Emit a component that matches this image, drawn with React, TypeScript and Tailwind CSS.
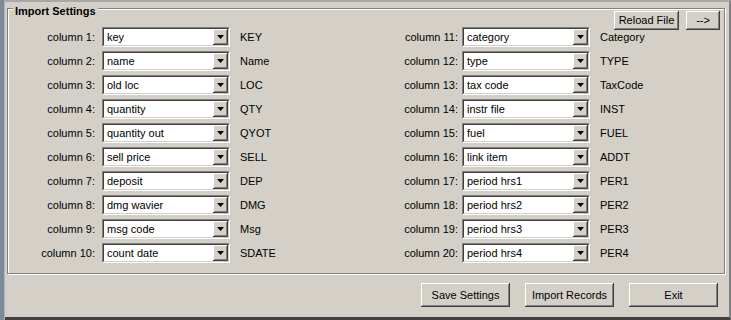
const left = [
  ['column 1:', 'key', 'KEY'],
  ['column 2:', 'name', 'Name'],
  ['column 3:', 'old loc', 'LOC'],
  ['column 4:', 'quantity', 'QTY'],
  ['column 5:', 'quantity out', 'QYOT'],
  ['column 6:', 'sell price', 'SELL'],
  ['column 7:', 'deposit', 'DEP'],
  ['column 8:', 'dmg wavier', 'DMG'],
  ['column 9:', 'msg code', 'Msg'],
  ['column 10:', 'count date', 'SDATE'],
];

const right = [
  ['column 11:', 'category', 'Category'],
  ['column 12:', 'type', 'TYPE'],
  ['column 13:', 'tax code', 'TaxCode'],
  ['column 14:', 'instr file', 'INST'],
  ['column 15:', 'fuel', 'FUEL'],
  ['column 16:', 'link item', 'ADDT'],
  ['column 17:', 'period hrs1', 'PER1'],
  ['column 18:', 'period hrs2', 'PER2'],
  ['column 19:', 'period hrs3', 'PER3'],
  ['column 20:', 'period hrs4', 'PER4'],
];

const raised =
  'shadow-[inset_-1px_-1px_0_#404040,inset_1px_1px_0_#ffffff,inset_-2px_-2px_0_#808080]';

function Combo({ value }: { value: string }) {
  return (
    <div className="w-[128px] h-[20px] flex items-center bg-white border-t border-l border-t-[#808080] border-l-[#808080] border-b border-r border-b-white border-r-white">
      <div className="flex-1 h-full flex items-center border-t border-l border-t-[#404040] border-l-[#404040] border-b border-r border-b-[#d4d0c8] border-r-[#d4d0c8]">
        <span className="flex-1 pl-[3px] leading-[13px] whitespace-nowrap">{value}</span>
        <div
          className={`w-[15px] h-[16px] bg-[#d4d0c8] flex items-center justify-center ${raised}`}
        >
          <svg width="7" height="4" viewBox="0 0 7 4">
            <path d="M0 0h7L3.5 4z" fill="#000" />
          </svg>
        </div>
      </div>
    </div>
  );
}

function Button({ label, className }: { label: string; className: string }) {
  return (
    <div className={`bg-[#d4d0c8] flex items-center justify-center leading-[13px] ${raised} ${className}`}>
      {label}
    </div>
  );
}

export default function App() {
  return (
    <div className="w-[731px] h-[320px] flex overflow-hidden bg-[#d4d0c8] text-[11px] text-black font-['Liberation_Sans',Arial,sans-serif]">
      <div className="w-[5px] h-full bg-[#7d8b99] border-r border-[#aab4be]" />
      <div className="flex-1 flex flex-col border-t-2 border-t-[#a8a8a8] border-r-2 border-r-[#808080] border-b-[3px] border-b-[#404040]">
        <div className="relative ml-[2px] mt-[6px] w-[718px] h-[266px] border border-[#808080] shadow-[inset_1px_1px_0_#ffffff,1px_1px_0_#ffffff] flex flex-col">
          <span className="absolute left-[5px] -top-[4px] px-[2px] bg-[#d4d0c8] font-bold leading-[13px]">
            Import Settings
          </span>
          <div className="flex justify-end gap-[7px] pr-[4px] mt-[2px] h-[19px]">
            <Button label="Reload File" className="w-[65px] h-[19px]" />
            <Button label="-->" className="w-[34px] h-[19px]" />
          </div>
          <div className="-mt-[5px] flex flex-col">
            {left.map((l, i) => {
              const r = right[i];
              return (
                <div key={l[0]} className="h-[24px] flex items-center leading-[13px]">
                  <span className="w-[87px] text-right whitespace-nowrap">{l[0]}</span>
                  <div className="ml-[7px]">
                    <Combo value={l[1]} />
                  </div>
                  <span className="ml-[10px] w-[100px]">{l[2]}</span>
                  <span className="w-[118px] text-right whitespace-nowrap">{r[0]}</span>
                  <div className="ml-[4px]">
                    <Combo value={r[1]} />
                  </div>
                  <span className="ml-[10px]">{r[2]}</span>
                </div>
              );
            })}
          </div>
        </div>
        <div className="mt-[9px] flex justify-end gap-[15px] pr-[11px]">
          <Button label="Save Settings" className="w-[89px] h-[24px]" />
          <Button label="Import Records" className="w-[89px] h-[24px]" />
          <Button label="Exit" className="w-[89px] h-[24px]" />
        </div>
      </div>
    </div>
  );
}
